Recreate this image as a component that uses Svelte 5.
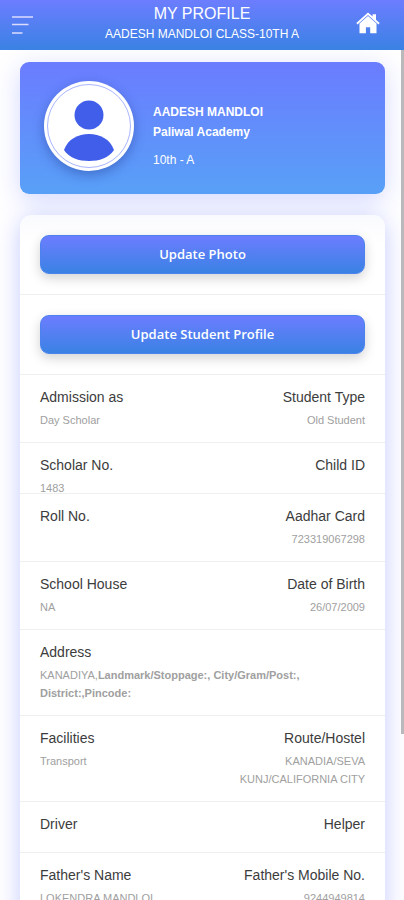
<script>
    const student = {
        name: "AADESH MANDLOI",
        school: "Paliwal Academy",
        section: "10th - A",
    };

    const details = [
        { left: ["Admission as", "Day Scholar"], right: ["Student Type", "Old Student"] },
        { left: ["Scholar No.", "1483"], right: ["Child ID", ""], compact: true },
        { left: ["Roll No.", ""], right: ["Aadhar Card", "723319067298"] },
        { left: ["School House", "NA"], right: ["Date of Birth", "26/07/2009"] },
        { address: "KANADIYA,", parts: "Landmark/Stoppage:, City/Gram/Post:, District:,Pincode:" },
        { left: ["Facilities", "Transport"], right: ["Route/Hostel", "KANADIA/SEVA KUNJ/CALIFORNIA CITY"] },
        { left: ["Driver", ""], right: ["Helper", ""] },
        { left: ["Father's Name", "LOKENDRA MANDLOI"], right: ["Father's Mobile No.", "9244949814"] },
    ];
</script>

<div class="app">
    <header class="topbar">
        <button class="icon-button" aria-label="Menu">
            <svg width="22" height="20" viewBox="0 0 22 20" fill="none" stroke="#dcdcff" stroke-width="1.6">
                <path d="M0 2h21M0 9.500h16.500M0 18h10.500" />
            </svg>
        </button>
        <div class="heading">
            <h1>MY PROFILE</h1>
            <p>AADESH MANDLOI CLASS-10TH A</p>
        </div>
        <a class="home" href="#home" aria-label="Home">
            <svg width="24" height="22" viewBox="0 0 24 22" fill="#fff">
                <path d="M12 0.400 L16.600 4.600 V2.200 H20 V7.700 L23.700 11.100 L22.500 12.400 L12 3 L1.500 12.400 L0.300 11.100 Z" />
                <path d="M12 3.900 L20.500 11.500 V21.300 H14.200 V15.200 H9.900 V21.300 H3.500 V11.500 Z" />
            </svg>
        </a>
    </header>

    <main class="content">
        <section class="profile">
            <div class="avatar">
                <svg viewBox="0 0 84 84">
                    <circle cx="42" cy="42" r="41.500" fill="#fff" stroke="#a9b5ff" />
                    <circle cx="42" cy="31" r="14.500" fill="#405eea" />
                    <path d="M17 66C21 55 31 50 42 50S63 55 67 66C62 74 52 77 42 77S22 74 17 66Z" fill="#405eea" />
                </svg>
            </div>
            <div class="student">
                <strong>{student.name}</strong>
                <strong>{student.school}</strong>
                <span>{student.section}</span>
            </div>
        </section>

        <section class="details">
            <div class="action">
                <button>Update Photo</button>
            </div>
            <div class="action">
                <button>Update Student Profile</button>
            </div>
            {#each details as row}
                {#if row.address}
                    <div class="row">
                        <div class="cell address">
                            <h2>Address</h2>
                            <p>{row.address}<b>{row.parts}</b></p>
                        </div>
                    </div>
                {:else}
                    <div class="row" class:compact={row.compact}>
                        <div class="cell">
                            <h2>{row.left[0]}</h2>
                            {#if row.left[1]}<p>{row.left[1]}</p>{/if}
                        </div>
                        <div class="cell right">
                            <h2>{row.right[0]}</h2>
                            {#if row.right[1]}<p>{row.right[1]}</p>{/if}
                        </div>
                    </div>
                {/if}
            {/each}
        </section>
    </main>
    <div class="scroll-thumb"></div>
</div>

<style>
    :global(body) {
        margin: 0;
    }

    .app {
        position: relative;
        display: flex;
        flex-direction: column;
        height: 100vh;
        overflow: hidden;
        background: #fff;
        font-family: "Liberation Sans", Arial, sans-serif;
    }

    h1, h2, p {
        margin: 0;
        font-weight: 400;
    }

    .topbar {
        display: flex;
        align-items: center;
        justify-content: space-between;
        flex-shrink: 0;
        box-sizing: border-box;
        height: 50px;
        padding: 0 24px 4px 12px;
        background: linear-gradient(#6c7dff, #3a82e4);
        color: #fff;
        text-align: center;
    }

    .icon-button {
        display: flex;
        width: 36px;
        padding: 4px 0 0;
        border: 0;
        background: none;
    }

    .home {
        display: flex;
        justify-content: flex-end;
        width: 24px;
    }

    .heading {
        padding-top: 2px;
    }

    .heading h1 {
        font-size: 16px;
        line-height: 20px;
    }

    .heading p {
        font-size: 12px;
        line-height: 20px;
    }

    .content {
        flex: 1;
        min-height: 0;
        padding: 12px 19px 20px 20px;
        overflow-y: auto;
        scrollbar-width: none;
    }

    .profile {
        display: flex;
        align-items: center;
        gap: 19px;
        box-sizing: border-box;
        height: 132px;
        padding: 0 24px;
        border-radius: 9px;
        background: linear-gradient(#6b7cff, #58a0f7);
        box-shadow: 0 6px 26px rgba(108, 125, 255, 0.3);
        color: #fff;
    }

    .avatar {
        box-sizing: border-box;
        width: 90px;
        height: 90px;
        flex-shrink: 0;
        margin-bottom: 4px;
        padding: 3px;
        border-radius: 50%;
        background: #fff;
        box-shadow: 0 4px 12px rgba(30, 50, 140, 0.4);
    }

    .avatar svg {
        display: block;
    }

    .student {
        display: flex;
        flex-direction: column;
        padding-top: 16px;
        font-size: 12px;
        line-height: 20px;
    }

    .student span {
        margin-top: 8px;
    }

    .details {
        margin-top: 21px;
        border-radius: 12px;
        background: linear-gradient(#f9fafd, #fff 28px);
        box-shadow: 0 4px 24px rgba(108, 125, 255, 0.4);
    }

    .action {
        padding: 20px 20px 20px;
        border-bottom: 1px solid #eeefef;
    }

    .action button {
        display: block;
        width: 100%;
        height: 39px;
        padding: 0 0 1px;
        border: 1px solid #4b82ee;
        border-radius: 9px;
        background: linear-gradient(#6c7dff, #3a82e4);
        box-shadow: 0 4px 12px rgba(0, 0, 0, 0.18);
        color: #fff;
        font-family: "Open Sans", "Noto Sans", sans-serif;
        font-size: 13px;
        font-weight: 600;
    }

    .row {
        display: flex;
        justify-content: space-between;
        box-sizing: border-box;
        min-height: 51px;
        padding: 13px 20px;
        border-bottom: 1px solid #eeefef;
    }

    .row:last-child {
        border-bottom: 0;
    }

    /* the value may run down to the divider */
    .compact {
        height: 51px;
    }

    .cell {
        width: 50%;
    }

    .address {
        width: 270px;
    }

    .right {
        text-align: right;
    }

    .cell h2 {
        color: #3c3c3c;
        font-size: 14px;
        line-height: 18px;
    }

    .cell p {
        margin-top: 5px;
        color: #a0a0a0;
        font-size: 11px;
        line-height: 18px;
    }

    .scroll-thumb {
        position: absolute;
        top: 50px;
        right: 0;
        width: 3px;
        height: 76%;
        background: #b9b9bb;
    }
</style>
